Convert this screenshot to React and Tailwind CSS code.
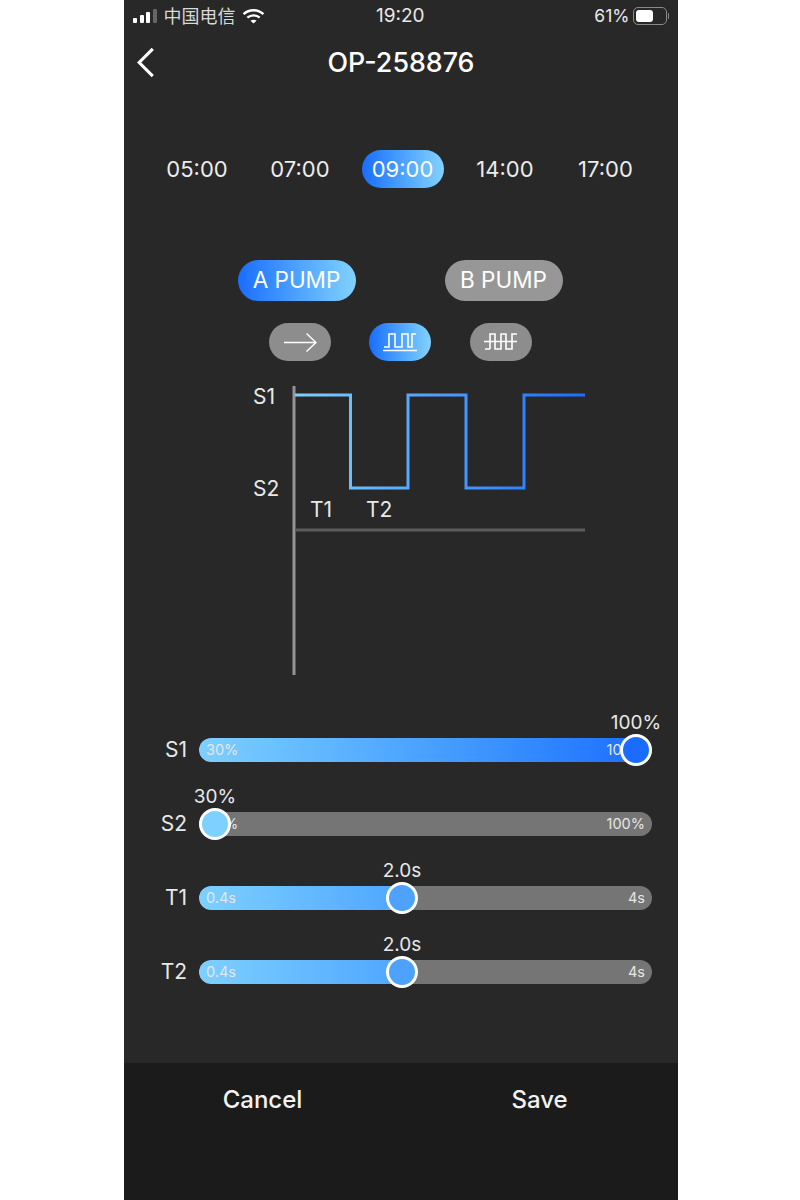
import React from "react";

const times = ["05:00", "07:00", "09:00", "14:00", "17:00"];

const sliders = [
  { name: "S1", min: "30%", max: "100%", value: "100%", pos: 437, fill: 453, thumb: "bg-[#1a6cff]" },
  { name: "S2", min: "30%", max: "100%", value: "30%", pos: 16, fill: 0, thumb: "bg-[#7dd0ff]" },
  { name: "T1", min: "0.4s", max: "4s", value: "2.0s", pos: 203, fill: 203, thumb: "bg-[#4fa2fb]" },
  { name: "T2", min: "0.4s", max: "4s", value: "2.0s", pos: 203, fill: 203, thumb: "bg-[#4fa2fb]" },
];

function StatusBar() {
  return (
    <div className="relative flex h-8 items-center pl-[9px] text-[#e8e8e8]">
      <div className="flex items-end gap-[2.5px]">
        <span className="h-[5px] w-1 rounded-[1px] bg-white" />
        <span className="h-[8px] w-1 rounded-[1px] bg-white" />
        <span className="h-[11px] w-1 rounded-[1px] bg-white" />
        <span className="h-[14px] w-1 rounded-[1px] bg-[#666]" />
      </div>
      <span className="ml-[7px] font-['Inter','Noto_Sans_CJK_SC',sans-serif] text-[18px] text-[#d8d8d8]">中国电信</span>
      <svg className="ml-[6px]" width="23" height="17" viewBox="0 0 24 18" fill="none" stroke="white" strokeWidth="2.6">
        <path d="M1.5 6.5C7.5 1 16.5 1 22.5 6.5" />
        <path d="M5.5 10.2C9.2 7 14.8 7 18.5 10.2" />
        <path d="M12 16.5L8.8 13.4C10.6 12 13.4 12 15.2 13.4Z" fill="white" stroke="none" />
      </svg>
      <span className="absolute left-[252px] text-[19px]">19:20</span>
      <div className="ml-auto flex items-center gap-[3px] pr-[9px]">
        <span className="text-[17.500px]">61%</span>
        <div className="flex items-center gap-[1px]">
          <div className="flex h-[18px] w-[34px] items-center rounded-[5px] border border-[#8a8a8a] p-[2px]">
            <div className="h-full w-[17px] rounded-[3px] bg-white" />
          </div>
          <span className="h-[6px] w-[1.5px] rounded-r-sm bg-[#8a8a8a]" />
        </div>
      </div>
    </div>
  );
}

function ModeIcon({ type }) {
  if (type === "arrow") {
    return (
      <svg width="34" height="20" viewBox="0 0 34 20" fill="none" stroke="white" strokeWidth="1.4">
        <path d="M1 10.5H33M23.5 1.5L33 10.5L23.5 19.5" />
      </svg>
    );
  }
  if (type === "pulse") {
    return (
      <svg width="34" height="20" viewBox="0 0 34 20" fill="none" stroke="white" strokeWidth="1.6">
        <path d="M1 15H6V2H12V15H19V2H25V15H29V2H33" />
        <path d="M0 18.500H34" />
      </svg>
    );
  }
  return (
    <svg width="34" height="20" viewBox="0 0 34 20" fill="none" stroke="white" strokeWidth="1.6">
      <path d="M6 17H1M6 17V2H11V17H17V2H22V17H28V2H33" />
      <path d="M0 9.500H33" />
    </svg>
  );
}

function Chart() {
  return (
    <div className="relative ml-[126px] mt-[24px] h-[291px] w-[350px]">
      <svg className="absolute inset-0" width="350" height="291" viewBox="0 0 350 291" fill="none">
        <defs>
          <linearGradient id="wave" gradientUnits="userSpaceOnUse" x1="45" y1="0" x2="335" y2="0">
            <stop offset="0" stopColor="#7dd0ff" />
            <stop offset="1" stopColor="#1a6cff" />
          </linearGradient>
        </defs>
        <path d="M44 1V290" stroke="#949494" strokeWidth="3" />
        <path d="M45 145H335" stroke="#5c5c5c" strokeWidth="3" />
        <path d="M45 10H100.500V103H158V10H216V103H274V10H335" stroke="url(#wave)" strokeWidth="3" />
      </svg>
      <span className="absolute left-[3px] top-[-4px] text-[21px] text-[#e8e8e8]">S1</span>
      <span className="absolute left-[3px] top-[88px] text-[21px] text-[#e8e8e8]">S2</span>
      <span className="absolute left-[60px] top-[109px] text-[21px] text-[#e8e8e8]">T1</span>
      <span className="absolute left-[116px] top-[109px] text-[21px] text-[#e8e8e8]">T2</span>
    </div>
  );
}

function Slider({ s }) {
  return (
    <div className="flex h-6 items-center">
      <span className="w-[64px] pr-[12px] text-right text-[21px] text-[#e8e8e8]">{s.name}</span>
      <div className="relative h-6 w-[453px] rounded-full bg-[#757575] text-[14.500px] text-[#e6e6e6]">
        {s.fill > 0 && (
          <div className="absolute inset-y-0 left-0 overflow-hidden rounded-l-full" style={{ width: s.fill }}>
            <div className="h-full w-[453px] rounded-full bg-gradient-to-r from-[#7dd0ff] to-[#1a6cff]" />
          </div>
        )}
        <span className="absolute left-[7px] top-[1px]">{s.min}</span>
        <span className="absolute right-[7px] top-[1px]">{s.max}</span>
        <div
          className={`absolute top-[-4px] h-8 w-8 -translate-x-1/2 rounded-full border-[3px] border-white ${s.thumb}`}
          style={{ left: s.pos }}
        />
        <span
          className="absolute top-[-29px] -translate-x-1/2 text-[19px] whitespace-nowrap text-[#e8e8e8]"
          style={{ left: s.pos }}
        >
          {s.value}
        </span>
      </div>
    </div>
  );
}

export default function App() {
  return (
    <div className="min-h-[1200px] bg-white font-['Inter',sans-serif]">
      <div className="mx-auto flex h-[1200px] w-[554px] translate-x-[1px] flex-col bg-[#282828]">
        <StatusBar />

        {/* Title */}
        <div className="relative mt-[14px] flex h-[32px] items-center justify-center text-[26.800px] font-medium text-white">
          <svg className="absolute left-[11px]" width="22" height="31" viewBox="0 0 22 32" fill="none" stroke="white" strokeWidth="3.2">
            <path d="M18 2L4 16L18 30" />
          </svg>
          OP-258876
        </div>

        {/* Time picker */}
        <div className="mt-[72px] grid grid-cols-[103px_103px_103px_101px_100px] justify-center pr-[2px] text-[22px] text-[#ececec]">
          {times.map((t) =>
            t === "09:00" ? (
              <div key={t} className="mx-auto flex h-[38px] w-[82px] items-center justify-center rounded-full bg-gradient-to-r from-[#1a6cff] to-[#82d2ff] text-white">
                {t}
              </div>
            ) : (
              <div key={t} className="flex h-[38px] items-center justify-center pl-[1px]">{t}</div>
            )
          )}
        </div>

        {/* Pump toggle */}
        <div className="mt-[72px] flex justify-center gap-[89px] pr-[2px] text-[22.500px] text-white">
          <div className="flex h-[41px] w-[118px] items-center justify-center rounded-full bg-gradient-to-r from-[#1a6cff] to-[#82d2ff] pb-[1px]">A PUMP</div>
          <div className="flex h-[41px] w-[118px] items-center justify-center rounded-full bg-[#979797] pb-[1px]">B PUMP</div>
        </div>

        {/* Wave mode */}
        <div className="ml-[145px] mt-[22px] flex gap-[38px]">
          <div className="flex h-[38px] w-[62px] items-center justify-center rounded-full bg-[#8d8d8d]"><ModeIcon type="arrow" /></div>
          <div className="flex h-[38px] w-[62px] items-center justify-center rounded-full bg-gradient-to-r from-[#1a6cff] to-[#82d2ff]"><ModeIcon type="pulse" /></div>
          <div className="ml-[1px] flex h-[38px] w-[62px] items-center justify-center rounded-full bg-[#8d8d8d]"><ModeIcon type="both" /></div>
        </div>

        <Chart />

        {/* Sliders */}
        <div className="mt-[62px] flex flex-col gap-[50px] pl-[11px]">
          {sliders.map((s) => (
            <Slider key={s.name} s={s} />
          ))}
        </div>

        {/* Footer */}
        <div className="mt-auto grid h-[137px] grid-cols-2 bg-[#1b1b1b] pt-[19px] text-center text-[24px] font-medium text-[#f2f2f2]">
          <span>Cancel</span>
          <span>Save</span>
        </div>
      </div>
    </div>
  );
}
